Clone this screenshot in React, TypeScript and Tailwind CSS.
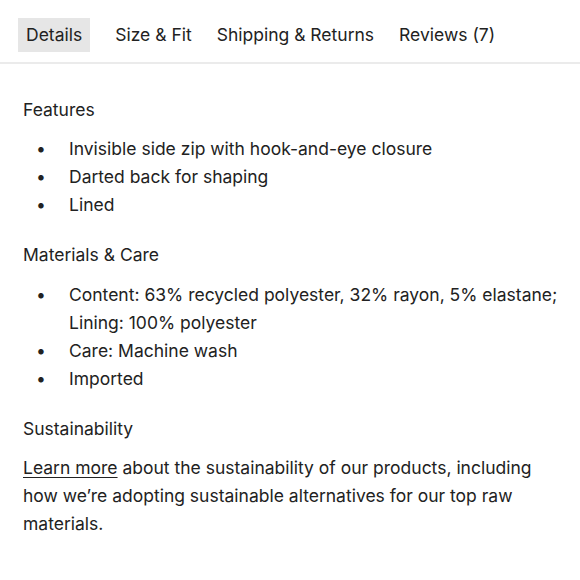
export default function App() {
  const tabs = ['Details', 'Size & Fit', 'Shipping & Returns', 'Reviews (7)'];
  return (
    <div className="w-[580px] h-[580px] bg-white text-[#222] text-[17.5px] leading-[28px] font-['Inter',sans-serif]">
      {/* Tabs */}
      <div className="flex items-center gap-[25px] px-[18px] pt-[18px] pb-[10px] border-b-2 border-[#ebebeb]">
        {tabs.map((t, i) => (
          <div
            key={t}
            className={`h-[34px] flex items-center ${i === 0 ? 'bg-[#e6e6e6] px-[8px]' : ''}`}
          >
            {t}
          </div>
        ))}
      </div>

      <div className="pl-[23px] pr-[8px] pt-[32px]">
        <h3>Features</h3>
        <ul className="mt-[11px]">
          <li className="flex"><span className="w-[46px] pl-[13px]">•</span><span>Invisible side zip with hook-and-eye closure</span></li>
          <li className="flex"><span className="w-[46px] pl-[13px]">•</span><span>Darted back for shaping</span></li>
          <li className="flex"><span className="w-[46px] pl-[13px]">•</span><span>Lined</span></li>
        </ul>

        <h3 className="mt-[22px]">Materials &amp; Care</h3>
        <ul className="mt-[12px]">
          <li className="flex"><span className="w-[46px] pl-[13px] shrink-0">•</span><span>Content: 63% recycled polyester, 32% rayon, 5% elastane; Lining: 100% polyester</span></li>
          <li className="flex"><span className="w-[46px] pl-[13px]">•</span><span>Care: Machine wash</span></li>
          <li className="flex"><span className="w-[46px] pl-[13px]">•</span><span>Imported</span></li>
        </ul>

        <h3 className="mt-[22px]">Sustainability</h3>
        <p className="mt-[11px] pr-[30px]">
          <a className="underline underline-offset-[3px]">Learn more</a> about the sustainability of our products, including how we’re adopting sustainable alternatives for our top raw materials.
        </p>
      </div>
    </div>
  );
}
